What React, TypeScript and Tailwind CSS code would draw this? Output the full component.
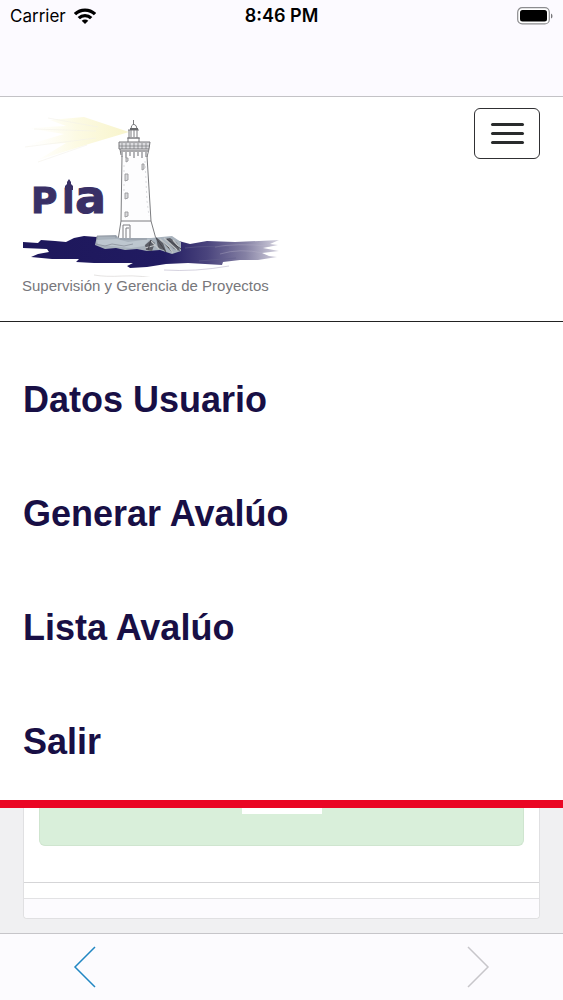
import React from "react";

const menuItems = ["Datos Usuario", "Generar Avalúo", "Lista Avalúo", "Salir"];

function WifiIcon() {
  return (
    <svg viewBox="0 0 22 16" className="h-4 w-[22px]" aria-hidden="true">
      <g fill="none" stroke="#000" strokeWidth="3.300">
        <path d="M1 6.200C6.500 .700 15.500 .700 21 6.200" />
        <path d="M4.800 10.200C8.300 6.700 13.700 6.700 17.200 10.200" />
      </g>
      <path d="M7.700 12.700C9.600 11 12.400 11 14.300 12.700L11 16Z" />
    </svg>
  );
}

function BatteryIcon() {
  return (
    <svg viewBox="0 0 36 18" className="h-[18px] w-9" aria-hidden="true">
      <rect x=".7" y=".7" width="31.600" height="16.200" rx="4.500" fill="#fff" stroke="#8c8c8f" strokeWidth="1.200" />
      <rect x="3" y="3" width="27" height="11.600" rx="2.500" />
      <path d="M34 6.500Q35.500 7 35.500 9T34 11.500Z" fill="#77777a" />
    </svg>
  );
}

function StatusBar() {
  return (
    <div className="h-[97px] border-b border-[#c3c2c6] bg-[#fcfaff] px-[10px] pt-1">
      <div className="grid h-6 grid-cols-3 items-center text-black">
        <div className="flex items-center gap-2">
          <span className="text-[17px] leading-6">Carrier</span>
          <WifiIcon />
        </div>
        <span className="text-center text-[18px] leading-6 font-semibold">8:46 PM</span>
        <div className="flex justify-end">
          <BatteryIcon />
        </div>
      </div>
    </div>
  );
}

function Lighthouse() {
  return (
    <svg viewBox="22 112 258 166" className="h-[166px] w-[258px]" role="img" aria-label="PIA">
      <defs>
        <linearGradient id="sea" x1="0" x2="1">
          <stop offset="0" stopColor="#1d175b" />
          <stop offset=".55" stopColor="#211b61" />
          <stop offset=".72" stopColor="#4a447d" />
          <stop offset=".87" stopColor="#8581a4" />
          <stop offset="1" stopColor="#d5d3df" />
        </linearGradient>
        <linearGradient id="beam" x1="1" x2="0">
          <stop offset="0" stopColor="#f8f4cb" />
          <stop offset=".5" stopColor="#fcfae3" />
          <stop offset="1" stopColor="#fffef6" stopOpacity="0" />
        </linearGradient>
      </defs>
      <path d="M129 133L84 118L50 121L66 127L26 129L64 135L24 147L66 144L38 161L92 144Z" fill="url(#beam)" />
      <g stroke="#f4f2ea" strokeWidth=".6" fill="none">
        <path d="M98 128L48 119M96 132L34 130M96 139L25 148M87 146L38 163" />
      </g>

      <path
        d="M23 243L38 244L41 241L55 242L66 243L74 239L84 237L97 238L150 240L175 241L190 245L207 242L235 243L279 241L270 245L278 246L263 249L279 252L262 254L269 257L277 258L258 261L240 261L223 263L222 266L188 264L166 265L147 268L130 269L127 267L133 264L94 264L76 263L79 260L52 260L31 258L38 255L49 253L47 250L23 249Z"
        fill="url(#sea)"
      />
      <g fill="none" stroke="#b8b4c9" strokeWidth=".6">
        <path d="M215 248Q235 244 270 247M220 255Q240 249 263 254" opacity=".6" />
        <path d="M164 271Q195 273 229 267" />
        <path d="M94 276Q105 278 123 277T165 281" stroke="#d3d0cf" />
        <path d="M185 249Q210 246 229 249M199 262L236 259" stroke="#625e8c" />
      </g>

      <path d="M122 154L121 222L119 241H157L151 222L147 154Z" fill="#fdfdfe" />
      <g fill="none" stroke="#7c7d80" strokeWidth="1">
        <path d="M122 157L121 222L118 241M147 157L151 222L156 240M121 222H151" />
        <path d="M123 239V226H130V240M126 239V229H129" />
        <path d="M133.500 121V126M131 130Q131 126 133.500 125Q137 126 137 130" />
        <path d="M128 131H139M129 131V139M131 131V138M134 131V138M137 131V139M127 139H140M128 143V139H139V143" />
        <path d="M120 150L121 156M149 150L147 158" />
      </g>
      <g fill="#d9dadc" stroke="#98999c" strokeWidth=".9">
        <path d="M126 159H128V162L126 163Z" />
        <path d="M142 165H144V170L142 171Z" />
        <path d="M125 175H128V181L125 182Z" />
        <path d="M125 194H128V199L125 200Z" />
        <path d="M125 213H128V217L125 218Z" />
      </g>
      <path d="M119 143H150L149 150H119Z" fill="#dcdcdf" stroke="#77777a" />
      <path d="M119 147H150M122 144V150M126 144V150M130 144V150M134 144V150M138 144V150M142 144V150M146 144V150" stroke="#77787b" strokeWidth=".7" />
      <path d="M121 152H148M122 153V158M126 153V159M130 153V157M134 153V159M138 153V157M142 153V159M146 153V158" stroke="#8e8f93" strokeWidth="1.300" />
      <path d="M130 129H138V131H130Z" fill="#68696c" />
      <path d="M145 162L146 182L147 202L149 217M124 166V176M124 185V193" fill="none" stroke="#dcdde0" strokeDasharray="2 3" />

      <path d="M97 237L116 236L119 239L151 239L172 237L181 243L181 252L172 255L160 251L147 252L137 250L125 251L116 249L105 250L95 246Z" fill="#a9b3bd" />
      <path d="M97 241L117 240L128 243L150 240L144 247L131 249L112 247L98 246Z" fill="#bdc7cf" />
      <path d="M97 240V237H116V239M96 245L105 247L112 245L124 247L133 245M120 240H147" fill="none" stroke="#8a909a" strokeWidth=".8" />
      <path d="M145 246L151 241L155 244L152 252L146 251ZM156 238L163 244L166 252L158 249ZM165 240L174 250L180 252L177 244L170 239Z" fill="#5c5e66" />
      <path d="M151 242L159 250M160 240L169 248L173 254M164 239L177 251M145 249L156 246M173 241L179 248" stroke="#c3c7ca" strokeWidth="1.200" />
      <path d="M156 239L166 253M167 240L181 250M151 241L148 251" stroke="#44454d" strokeWidth="1" />

      <path d="M65 191V187L67 185V183L69 180L71 183V185L73 187V191Z" fill="#393066" />
      <g
        fill="#393066"
        stroke="#393066"
        strokeWidth="1"
        fontFamily="DejaVu Sans, sans-serif"
        fontWeight="700"
      >
        <text x="31" y="214" fontSize="36">P</text>
        <text x="62" y="214" fontSize="34">I</text>
        <text x="75" y="214" fontSize="46">a</text>
      </g>
    </svg>
  );
}

function Header() {
  return (
    <header className="flex items-start justify-between border-b border-[#222] bg-white pt-[11px] pr-[23px] pb-[26px] pl-[22px]">
      <a href="#inicio" className="flex flex-col pt-[3px]">
        <Lighthouse />
        <span className="text-[15px] leading-[18px] whitespace-nowrap text-[#77777b]">
          Supervisión y Gerencia de Proyectos
        </span>
      </a>
      <button
        type="button"
        aria-label="Menú"
        aria-expanded="true"
        className="flex h-[51px] w-[66px] flex-col items-center justify-center gap-[6px] rounded-md border border-[#303033] bg-white"
      >
        <span className="h-[3px] w-[33px] rounded-full bg-[#292b2c]" />
        <span className="h-[3px] w-[33px] rounded-full bg-[#292b2c]" />
        <span className="h-[3px] w-[33px] rounded-full bg-[#292b2c]" />
      </button>
    </header>
  );
}

function Menu() {
  return (
    <nav className="border-b-8 border-[#ea0624] bg-white pt-[21px] pb-px">
      <ul>
        {menuItems.map((item) => (
          <li key={item}>
            <a
              href="#menu"
              className="flex h-[114px] items-center px-[23px] text-[36px] leading-10 font-bold text-[#180f45]"
            >
              {item}
            </a>
          </li>
        ))}
      </ul>
    </nav>
  );
}

function Content() {
  return (
    <main className="flex-1 bg-[#f0f0f2] px-[23px] pb-[14px]">
      <section className="rounded-b border border-t-0 border-[#e0e0e2] bg-white">
        <div className="px-[15px] pb-9">
          <div className="flex h-[38px] items-start justify-center rounded-b-md border border-t-0 border-[#cfe5cf] bg-[#d9efda]">
            <div className="h-[6px] w-20 bg-white" />
          </div>
        </div>
        <div className="h-4 border-t border-[#d5d5d7]" />
        <div className="h-5 rounded-b border-t border-[#e2e2e4] bg-[#fcfbfe]" />
      </section>
    </main>
  );
}

function Toolbar() {
  return (
    <footer className="flex h-[67px] items-center justify-between border-t border-[#c6c5c9] bg-[#fcfbfe] px-[73px]">
      <button type="button" aria-label="Atrás">
        <svg viewBox="0 0 24 42" className="h-[42px] w-6" fill="none" stroke="#2187c2" strokeWidth="1.500">
          <path d="M22 1L2 21L22 41" />
        </svg>
      </button>
      <button type="button" aria-label="Adelante" disabled>
        <svg viewBox="0 0 24 42" className="h-[42px] w-6" fill="none" stroke="#c7c6ca" strokeWidth="1.500">
          <path d="M2 1L22 21L2 41" />
        </svg>
      </button>
    </footer>
  );
}

export default function App() {
  return (
    <div className="flex min-h-screen flex-col bg-white font-['Liberation_Sans',Arial,sans-serif]">
      <div className="font-['Inter',sans-serif]">
        <StatusBar />
      </div>
      <Header />
      <Menu />
      <Content />
      <Toolbar />
    </div>
  );
}
